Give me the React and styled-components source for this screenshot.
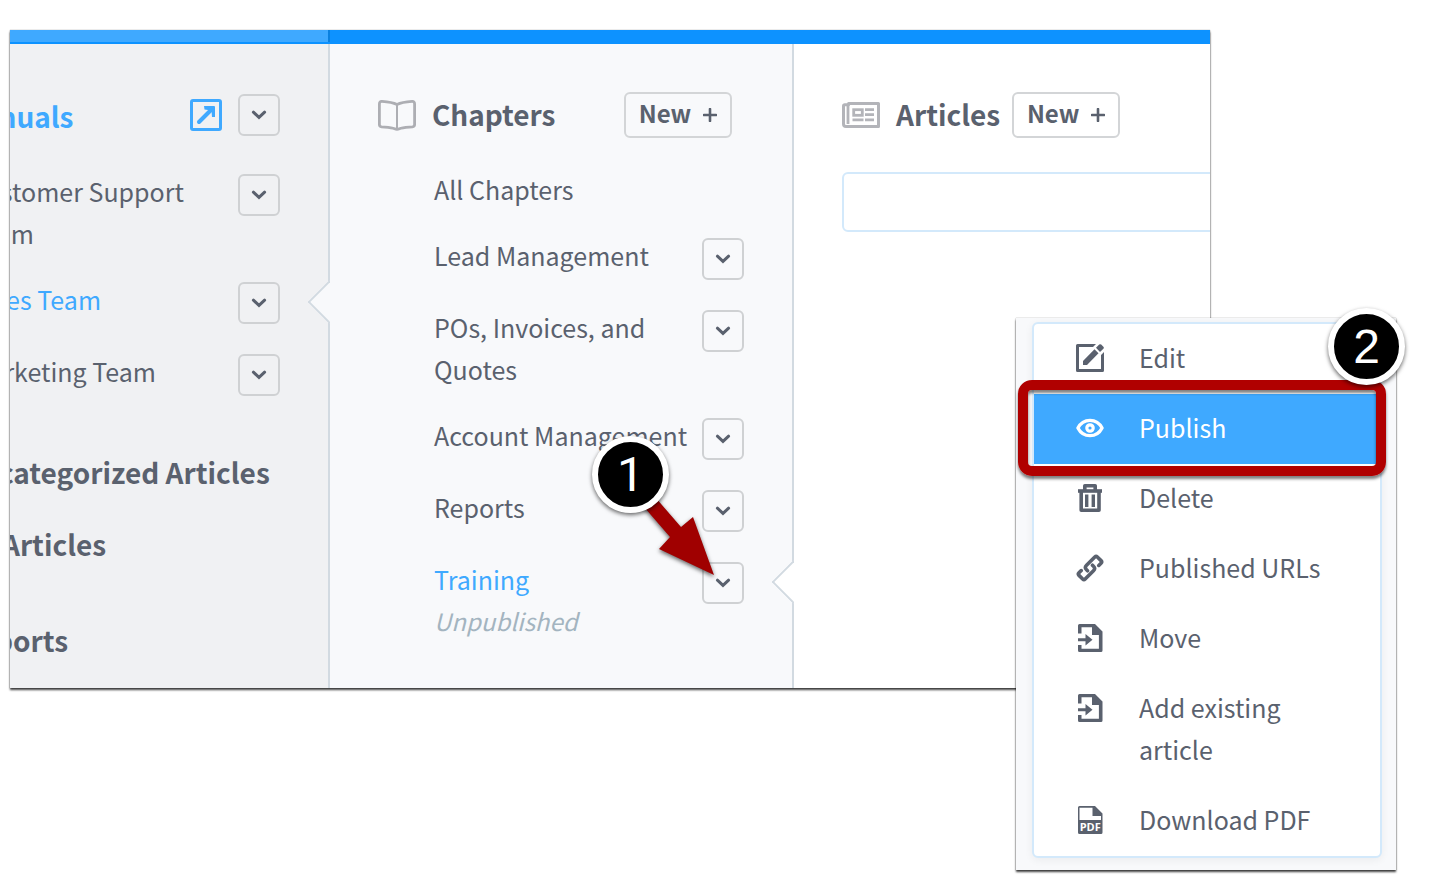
import React from 'react';
import styled, { createGlobalStyle, css } from 'styled-components';

const ink = '#5a616e';
const blue = '#3fa9ff';
const line = '#d2dae1';
const paleBlue = '#d3e9fb';

const GlobalStyle = createGlobalStyle`
  *, *::before, *::after { box-sizing: border-box; }
  body {
    margin: 0;
    background: #fff;
    color: ${ink};
    font-family: "Noto Sans CJK SC", "Noto Sans", sans-serif;
    font-size: 25px;
    line-height: 42px;
  }
  button, input { font: inherit; color: inherit; }
  h1, h2, p, ul { margin: 0; padding: 0; }
  ul { list-style: none; }
  a { color: inherit; text-decoration: none; }
  svg { display: block; flex: none; }
`;

const Page = styled.main`
  position: relative;
  min-height: 878px;
  padding: 30px 224px 0 10px;
  overflow: hidden;
`;

const Board = styled.section`
  box-shadow: 0 0 1px rgba(0, 0, 0, 0.45), 0 2px 2px rgba(0, 0, 0, 0.75);
`;

const TopBar = styled.div`
  display: flex;
  height: 14px;
  background: #0d92ff;
`;

const TopBarActive = styled.div`
  width: 320px;
  height: 12px;
  background: ${blue};
  border-right: 2px solid #0a80df;
`;

const Columns = styled.div`
  display: grid;
  grid-template-columns: 320px 464px minmax(0, 1fr);
  min-height: 644px;
  overflow: hidden;
`;

const Column = styled.div`
  position: relative;
  min-width: 0;
  padding: 48px 48px 24px;
  background: ${(p) => p.$bg};
  ${(p) => p.$divided && css`border-right: 2px solid ${line};`}
`;

const ManualsColumn = styled(Column)`
  padding-left: 0;
`;

const Notch = styled.span`
  position: absolute;
  z-index: 1;
  right: -18px;
  top: ${(p) => p.$top}px;
  width: 32px;
  height: 32px;
  background: ${(p) => p.$bg};
  border: solid ${line};
  border-width: 0 0 2px 2px;
  transform: rotate(45deg);
  clip-path: polygon(0 0, 100% 100%, 0 100%);
`;

const Title = styled.h2`
  font-size: 28px;
  font-weight: 600;
  line-height: 42px;
  color: ${(p) => (p.$active ? blue : ink)};
`;

const Header = styled.header`
  display: flex;
  align-items: center;
  gap: 16px;
  height: 46px;
  margin-bottom: 30px;

  ${Title} { padding-bottom: 2px; }
`;

const ManualsHeader = styled(Header)`
  margin: 0 0 32px -52px;

  ${Title} { padding: 2px 0 0; }
`;

const ArticlesHeader = styled(Header)`
  margin-bottom: 34px;

  ${Title} { margin-right: -4px; }
`;

const Spacer = styled.span`
  flex: 1;
`;

const NewButton = styled.button`
  display: flex;
  align-items: center;
  justify-content: center;
  gap: 12px;
  width: 108px;
  height: 46px;
  margin-right: 12px;
  padding: 0;
  border: 2px solid #d3d5d7;
  border-radius: 6px;
  background: transparent;
  font-size: 24px;
  font-weight: 600;
  line-height: 38px;
  cursor: pointer;

  span { padding-bottom: 4px; }
`;

const Toggle = styled.button`
  display: grid;
  place-items: center;
  flex: none;
  width: 42px;
  height: 42px;
  margin-top: 4px;
  padding: 0;
  border: 2px solid #cfd1d3;
  border-radius: 6px;
  background: transparent;
  cursor: pointer;
`;

const HeaderToggle = styled(Toggle)`
  margin-top: 0;
`;

const List = styled.ul`
  display: flex;
  flex-direction: column;
  gap: 24px;
`;

const ManualList = styled(List)`
  margin-left: -40px;
`;

const ChapterList = styled(List)`
  padding-left: 56px;
`;

const Row = styled.li`
  display: flex;
  align-items: flex-start;
  justify-content: space-between;
  min-height: ${(p) => (p.$plain ? 42 : 48)}px;
`;

const ItemLink = styled.a`
  max-width: 260px;
  white-space: ${(p) => (p.$wrap ? 'normal' : 'nowrap')};
  color: ${(p) => (p.$active ? blue : ink)};
`;

const NarrowLink = styled(ItemLink)`
  max-width: 230px;
`;

const Status = styled.em`
  display: block;
  font-size: 24px;
  color: #a3b4c0;
`;

const Sections = styled.nav`
  display: flex;
  flex-direction: column;
  gap: 30px;
  margin: 53px 0 0 -50px;
  white-space: nowrap;
`;

const LastSection = styled(Title)`
  margin-top: 24px;
`;

const Search = styled.input`
  display: block;
  width: calc(100% + 60px);
  height: 60px;
  padding: 0 20px;
  border: 2px solid ${paleBlue};
  border-radius: 6px;
  background: #fff;
  outline: none;
`;

const Popup = styled.aside`
  position: absolute;
  top: 318px;
  right: 38px;
  width: 380px;
  padding: 4px 14px 12px 16px;
  background: #f8f9fb;
  box-shadow: 0 0 1px rgba(0, 0, 0, 0.45), 0 2px 2px rgba(0, 0, 0, 0.75);
`;

const Menu = styled.ul`
  border: 2px solid ${paleBlue};
  border-radius: 6px;
  background: #fff;
  box-shadow: 0 2px 8px rgba(0, 0, 0, 0.06);
`;

const MenuButton = styled.button`
  display: flex;
  align-items: flex-start;
  gap: 35px;
  width: 100%;
  padding: 12px 48px 16px 42px;
  border: 0;
  background: ${(p) => (p.$active ? blue : 'transparent')};
  color: ${(p) => (p.$active ? '#fff' : ink)};
  text-align: left;
  cursor: pointer;

  svg { margin-top: 8px; }
`;

const Highlight = styled.div`
  position: absolute;
  top: 62px;
  left: 2px;
  width: 368px;
  height: 96px;
  border: 10px solid #b00000;
  border-radius: 14px;
  box-shadow: 0 3px 3px rgba(0, 0, 0, 0.5), inset 0 3px 3px rgba(0, 0, 0, 0.5);
  pointer-events: none;
`;

const Badge = styled.span`
  position: absolute;
  z-index: 3;
  top: ${(p) => p.$top}px;
  left: ${(p) => p.$left}px;
  display: grid;
  place-items: center;
  width: 77px;
  height: 77px;
  border: 6px solid #fff;
  border-radius: 50%;
  background: #000;
  color: #fff;
  box-shadow: 0 2px 4px rgba(0, 0, 0, 0.6);
  font-family: ${(p) => p.$font || '"Liberation Sans", Arial'}, sans-serif;
  font-size: 48px;
  line-height: 64px;
`;

const Arrow = styled.svg`
  position: absolute;
  z-index: 2;
  top: 456px;
  left: 600px;
  filter: drop-shadow(0 2px 2px rgba(0, 0, 0, 0.6));
  pointer-events: none;
`;

const Chevron = () => (
  <svg width="16" height="10" viewBox="0 0 16 10" fill="none" stroke={ink} strokeWidth="3" strokeLinecap="round">
    <path d="M2.400 2.200 8 7.400l5.600-5.200" />
  </svg>
);

const Plus = () => (
  <svg width="14" height="14" viewBox="0 0 14 14" stroke={ink} strokeWidth="2.600" strokeLinecap="round">
    <path d="M7 1v12M1 7h12" />
  </svg>
);

const ExternalIcon = () => (
  <svg width="32" height="32" viewBox="0 0 32 32" fill="none" stroke={blue}>
    <rect x="1.500" y="1.500" width="29" height="29" rx="1.500" strokeWidth="3" />
    <path d="M9 23 22 10" strokeWidth="4" strokeLinecap="round" />
    <path d="M14 7h10a1 1 0 0 1 1 1v10h-3l-.5-6.500-7-1Z" fill={blue} stroke="none" />
  </svg>
);

const BookIcon = () => (
  <svg width="38" height="31" viewBox="0 0 38 31" fill="none" stroke="#adaeb3" strokeLinejoin="round">
    <path d="M19 4.600C15 2.500 9 1.700 4 1.400 2.300 1.300 1.400 2.200 1.400 4v20.500c0 1.500.8 2.200 2.200 2.400 5.500.5 10 .6 13 1.900 1.700.8 3.100.8 4.800 0 3-1.300 7.500-1.400 13-1.900 1.400-.2 2.200-.9 2.200-2.400V4c0-1.800-.9-2.700-2.600-2.600-5 .3-11 1.100-15 3.200Z" strokeWidth="2.800" />
    <path d="M19 4.600V29" strokeWidth="2" />
  </svg>
);

const NewsIcon = () => (
  <svg width="38" height="26" viewBox="0 0 38 26" fill="none" stroke="#b3b4b9">
    <path d="M6.500 1.500h30v23H4a2.500 2.500 0 0 1-2.500-2.500V4a1.200 1.200 0 0 1 1.200-1.200h3.800Z" strokeWidth="3" strokeLinejoin="round" />
    <path d="M6 2v20" strokeWidth="2.800" />
    <rect x="11.700" y="7.700" width="8.600" height="5.600" strokeWidth="2.800" />
    <path d="M23 7.700h9M23 12.700h9M23 17.800h9M10.500 17.800h11" strokeWidth="2.800" />
  </svg>
);

const EditIcon = () => (
  <svg width="28" height="28" viewBox="0 0 28 28" fill="currentColor">
    <path d="M1.500 0H20l-3 3H3v22h22V11l3-3v18.500a1.500 1.500 0 0 1-1.500 1.500h-25A1.500 1.500 0 0 1 0 26.500v-25A1.500 1.500 0 0 1 1.500 0Z" />
    <path d="M7 21v-4L18.500 5.200l4 4L11 21ZM20 3.800 23.200.6a1.500 1.500 0 0 1 2 0l2.200 2.200a1.500 1.500 0 0 1 0 2L24 8Z" />
  </svg>
);

const EyeIcon = () => (
  <svg width="28" height="28" viewBox="0 0 28 28" fill="none" stroke="currentColor">
    <path d="M1.900 14C4.500 9 9 6.300 14 6.300S23.500 9 26.100 14C23.500 19 19 21.700 14 21.700S4.500 19 1.900 14Z" strokeWidth="3.300" strokeLinejoin="round" />
    <circle cx="14" cy="14" r="3.200" strokeWidth="3.200" />
  </svg>
);

const TrashIcon = () => (
  <svg width="28" height="28" viewBox="0 0 28 28" fill="none" stroke="currentColor">
    <path d="M2 7h24" strokeWidth="3.600" />
    <path d="M8.800 6V1.800h10.400V6" strokeWidth="3.600" strokeLinejoin="round" />
    <path d="M5.200 7v19.200h17.800V7" strokeWidth="3.600" strokeLinejoin="round" />
    <path d="M10.700 10.500v12.500M17.300 10.500v12.500" strokeWidth="3.400" />
  </svg>
);

const LinkIcon = () => (
  <svg width="28" height="28" viewBox="0 0 28 28" fill="none" stroke="currentColor" strokeWidth="3.600" strokeLinecap="round" strokeLinejoin="round">
    <g transform="translate(14 14) rotate(-45)">
      <path d="M8 4.400h3.200q1.800 0 1.800-1.800v-5.200q0-1.800-1.800-1.800H-.5q-3.200 0-3.200 3.200V.2" />
      <path d="M-8-4.400h-3.200q-1.800 0-1.800 1.800v5.200q0 1.800 1.800 1.800H.5q3.200 0 3.200-3.200V-.2" />
    </g>
  </svg>
);

const MoveIcon = () => (
  <svg width="28" height="28" viewBox="0 0 28 28" fill="currentColor">
    <path d="M3.500 0H19l7.500 7.500v19A1.500 1.500 0 0 1 25 28H3.500A1.500 1.500 0 0 1 2 26.500V21h3.500v3.800h17.400V11H16V3.200H5.500v6.300H2v-8A1.500 1.500 0 0 1 3.500 0Z" />
    <path d="M2 14.200h7.500V10l7 5.800-7 5.700v-4.200H2Z" />
  </svg>
);

const PdfLabel = styled.text`
  font-family: "Open Sans", sans-serif;
  font-size: 11px;
  font-weight: 700;
`;

const PdfIcon = () => (
  <svg width="28" height="28" viewBox="0 0 28 28" fill="currentColor">
    <path d="M3.500 0H19l7.500 7.500v19A1.500 1.500 0 0 1 25 28H3.500A1.500 1.500 0 0 1 2 26.500v-25A1.500 1.500 0 0 1 3.500 0ZM3.500 1.800V14h21.500v-4H16.500V1.800Z" fillRule="evenodd" />
    <PdfLabel x="14.200" y="25" textAnchor="middle" fill="#fff">PDF</PdfLabel>
  </svg>
);

const manuals = [
  { name: 'Customer Support Team', wrap: true },
  { name: 'Sales Team', active: true },
  { name: 'Marketing Team' },
];

const chapters = [
  { name: 'Lead Management' },
  { name: 'POs, Invoices, and Quotes', wrap: true },
  { name: 'Account Management' },
  { name: 'Reports' },
  { name: 'Training', active: true, status: 'Unpublished' },
];

const actions = [
  { name: 'Edit', Icon: EditIcon },
  { name: 'Publish', Icon: EyeIcon, active: true },
  { name: 'Delete', Icon: TrashIcon },
  { name: 'Published URLs', Icon: LinkIcon },
  { name: 'Move', Icon: MoveIcon },
  { name: 'Add existing article', Icon: MoveIcon },
  { name: 'Download PDF', Icon: PdfIcon },
];

export default function App() {
  return (
    <>
      <GlobalStyle />
      <Page>
        <Board>
          <TopBar>
            <TopBarActive />
          </TopBar>
          <Columns>
            <ManualsColumn $bg="#f0f1f3" $divided>
              <ManualsHeader>
                <Title $active>Manuals</Title>
                <Spacer />
                <a href="#manuals" aria-label="Open manuals"><ExternalIcon /></a>
                <HeaderToggle aria-label="Manuals options"><Chevron /></HeaderToggle>
              </ManualsHeader>
              <ManualList>
                {manuals.map((m) => (
                  <Row key={m.name}>
                    <NarrowLink href="#manual" $wrap={m.wrap} $active={m.active}>{m.name}</NarrowLink>
                    <Toggle aria-label={`${m.name} options`}><Chevron /></Toggle>
                  </Row>
                ))}
              </ManualList>
              <Sections>
                <Title><a href="#uncategorized">Uncategorized Articles</a></Title>
                <Title><a href="#all">All Articles</a></Title>
                <LastSection><a href="#reports">Reports</a></LastSection>
              </Sections>
              <Notch $top={242} $bg="#f8f9fb" />
            </ManualsColumn>

            <Column $bg="#f8f9fb" $divided>
              <Header>
                <BookIcon />
                <Title>Chapters</Title>
                <Spacer />
                <NewButton><span>New</span><Plus /></NewButton>
              </Header>
              <ChapterList>
                <Row $plain><ItemLink href="#chapters">All Chapters</ItemLink></Row>
                {chapters.map((c) => (
                  <Row key={c.name}>
                    <ItemLink href="#chapter" $wrap={c.wrap} $active={c.active}>
                      {c.name}
                      {c.status && <Status>{c.status}</Status>}
                    </ItemLink>
                    <Toggle aria-label={`${c.name} options`}><Chevron /></Toggle>
                  </Row>
                ))}
              </ChapterList>
              <Notch $top={522} $bg="#fff" />
            </Column>

            <Column $bg="#fff">
              <ArticlesHeader>
                <NewsIcon />
                <Title>Articles</Title>
                <NewButton><span>New</span><Plus /></NewButton>
              </ArticlesHeader>
              <Search type="text" aria-label="Search articles" />
            </Column>
          </Columns>
        </Board>

        <Arrow width="140" height="140" viewBox="600 456 140 140" aria-hidden="true">
          <path d="M625 485 636 475 681 527 693 517 714 575 659 549 670 537Z" fill="#a00000" />
        </Arrow>
        <Badge $top={436} $left={592} $font="Roboto">1</Badge>

        <Popup>
          <Menu>
            {actions.map(({ name, Icon, active }) => (
              <li key={name}>
                <MenuButton $active={active}>
                  <Icon />
                  <span>{name}</span>
                </MenuButton>
              </li>
            ))}
          </Menu>
          <Highlight />
          <Badge $top={-10} $left={312}>2</Badge>
        </Popup>
      </Page>
    </>
  );
}
